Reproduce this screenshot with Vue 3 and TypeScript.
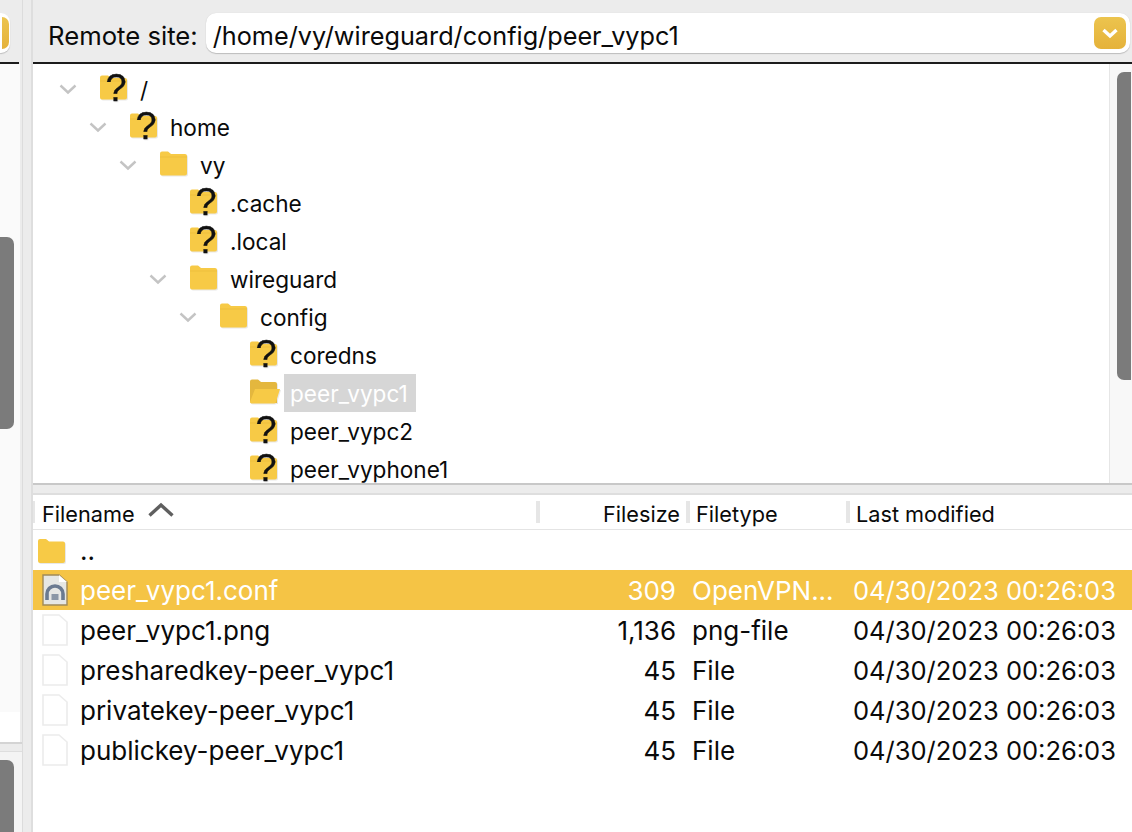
<template>
  <div class="window">
    <aside class="left">
      <div class="left-bar">
        <div class="left-input"><span class="left-drop" /></div>
      </div>
      <div class="left-list">
        <div class="thumb left-thumb-a" />
        <div class="left-list-fill" />
        <div class="left-list-white" />
      </div>
      <div class="left-sash" />
      <div class="left-status">
        <div class="thumb left-thumb-b" />
      </div>
    </aside>
    <div class="sash-v" />
    <main class="right">
      <div class="site-bar">
        <label class="site-label">Remote site:</label>
        <div class="site-input">
          <span class="site-path">/home/vy/wireguard/config/peer_vypc1</span>
          <span class="site-drop">
            <svg viewBox="0 0 32 32" width="32" height="32">
              <path d="M9.5 13 L16 19 L22.5 13" fill="none" stroke="#fff" stroke-width="3.4" />
            </svg>
          </span>
        </div>
      </div>
      <div class="tree-wrap">
        <div class="tree">
          <div
            v-for="node in treeNodes"
            :key="node.name + node.depth"
            class="tree-row"
            :style="{ paddingLeft: 25 + node.depth * 30 + 'px' }"
          >
            <svg v-if="node.open" class="chev" viewBox="0 0 20 12" width="20" height="12">
              <path d="M2.5 2.5 L10 9.5 L17.5 2.5" fill="none" stroke="#c4c4c4" stroke-width="2.4" />
            </svg>
            <span v-else class="chev-gap" />
            <svg class="folder" viewBox="0 0 30 32" width="30" height="32">
              <template v-if="node.kind === 'selected'">
                <path d="M1 5.5 Q1 3.5 3 3.5 H9 L12 6 H26 Q28 6 28 8 V27 H3 Q1 27 1 25 Z" fill="#e4b73e" />
                <path d="M6 13 H31 L27 26 Q26.6 27.5 25 27.5 H2.5 Q0.6 27.5 1.2 25.5 Z" fill="#f7ca46" />
              </template>
              <template v-else>
                <path d="M1 5.5 Q1 3.5 3 3.5 H9 L12 6 H26 Q28 6 28 8 V25.5 Q28 27.5 26 27.5 H3 Q1 27.5 1 25.5 Z" fill="#f7ca46" />
                <path d="M1 9 H28" stroke="#eebf3d" stroke-width="1" />
              </template>
              <text
                v-if="node.kind === 'unknown'"
                x="17"
                y="29"
                text-anchor="middle"
                class="question"
              >?</text>
            </svg>
            <span class="tree-name" :class="{ active: node.kind === 'selected' }">{{ node.name }}</span>
          </div>
        </div>
        <div class="tree-scroll">
          <div class="thumb tree-thumb" />
        </div>
      </div>
      <div class="sash-h" />
      <section class="table">
        <header class="thead">
          <div class="th col-name">
            <span>Filename</span>
            <svg viewBox="0 0 28 18" width="28" height="18">
              <path d="M2.5 14.5 L14 4 L25.5 14.5" fill="none" stroke="#5f5f5f" stroke-width="3.4" />
            </svg>
          </div>
          <div class="th col-size">Filesize</div>
          <div class="th col-type">Filetype</div>
          <div class="th col-date">Last modified</div>
        </header>
        <div
          v-for="file in files"
          :key="file.name"
          class="row"
          :class="{ selected: file.selected }"
        >
          <div class="cell col-name">
            <svg v-if="file.icon === 'folder'" class="file-icon is-folder" viewBox="0 0 30 32" width="30" height="32">
              <path d="M1 5 Q1 3 3 3 H9 L12 5.5 H26 Q28 5.5 28 7.5 V25 Q28 27 26 27 H3 Q1 27 1 25 Z" fill="#f7ca46" />
            </svg>
            <svg v-else-if="file.icon === 'conf'" class="file-icon" viewBox="0 0 30 32" width="30" height="32">
              <path d="M3 1 H19 L27 8 V31 H3 Z" fill="#e6e7e4" stroke="#a08a58" stroke-width="1.4" />
              <path d="M19 1 L27 8 H19 Z" fill="#fff" />
              <path d="M7 26 V20 A8 8 0 0 1 23 20 V26" fill="none" stroke="#6b7a90" stroke-width="3.6" />
              <rect x="11.5" y="20" width="7" height="6" fill="#8b97a6" />
            </svg>
            <svg v-else class="file-icon" viewBox="0 0 30 32" width="30" height="32">
              <path d="M3 1 H19 L27 8 V31 H3 Z" fill="#fff" stroke="#ececec" stroke-width="1.6" />
            </svg>
            <span class="file-name">{{ file.name }}</span>
          </div>
          <div class="cell col-size">{{ file.size }}</div>
          <div class="cell col-type">{{ file.type }}</div>
          <div class="cell col-date">{{ file.modified }}</div>
        </div>
      </section>
    </main>
  </div>
</template>

<script setup lang="ts">
interface TreeNode {
  name: string
  depth: number
  open: boolean
  kind: 'folder' | 'unknown' | 'selected'
}

interface FileRow {
  name: string
  size: string
  type: string
  modified: string
  icon: 'folder' | 'conf' | 'file'
  selected?: boolean
}

const STAMP = '04/30/2023 00:26:03'

const treeNodes: TreeNode[] = [
  { name: '/', depth: 0, open: true, kind: 'unknown' },
  { name: 'home', depth: 1, open: true, kind: 'unknown' },
  { name: 'vy', depth: 2, open: true, kind: 'folder' },
  { name: '.cache', depth: 3, open: false, kind: 'unknown' },
  { name: '.local', depth: 3, open: false, kind: 'unknown' },
  { name: 'wireguard', depth: 3, open: true, kind: 'folder' },
  { name: 'config', depth: 4, open: true, kind: 'folder' },
  { name: 'coredns', depth: 5, open: false, kind: 'unknown' },
  { name: 'peer_vypc1', depth: 5, open: false, kind: 'selected' },
  { name: 'peer_vypc2', depth: 5, open: false, kind: 'unknown' },
  { name: 'peer_vyphone1', depth: 5, open: false, kind: 'unknown' },
]

const files: FileRow[] = [
  { name: '..', size: '', type: '', modified: '', icon: 'folder' },
  { name: 'peer_vypc1.conf', size: '309', type: 'OpenVPN...', modified: STAMP, icon: 'conf', selected: true },
  { name: 'peer_vypc1.png', size: '1,136', type: 'png-file', modified: STAMP, icon: 'file' },
  { name: 'presharedkey-peer_vypc1', size: '45', type: 'File', modified: STAMP, icon: 'file' },
  { name: 'privatekey-peer_vypc1', size: '45', type: 'File', modified: STAMP, icon: 'file' },
  { name: 'publickey-peer_vypc1', size: '45', type: 'File', modified: STAMP, icon: 'file' },
]
</script>

<style>
html,
body {
  margin: 0;
  background: #ececec;
  overflow: hidden;
}
</style>

<style scoped>
.window {
  display: flex;
  width: 1132px;
  height: 832px;
  overflow: hidden;
  background: #ececec;
  color: #0a0a0a;
  font-family: Inter, "Liberation Sans", sans-serif;
  font-size: 26px;
}

.left {
  display: flex;
  flex-direction: column;
  width: 22px;
  flex-shrink: 0;
  border-right: 1px solid #dcdcdc;
}

.left-bar {
  width: 19px;
  height: 64px;
  box-sizing: border-box;
  padding-top: 13px;
  border-bottom: 2px solid #1c1c1c;
}

.left-input {
  display: flex;
  justify-content: flex-end;
  width: 10px;
  height: 40px;
  padding-top: 4px;
  box-sizing: border-box;
  background: #fff;
  border-radius: 0 9px 9px 0;
  box-shadow: 0 1px 1px #bdbdbd;
}

.left-drop {
  display: block;
  width: 7px;
  height: 32px;
  margin-right: 1px;
  border-radius: 0 7px 7px 0;
  background: linear-gradient(#ecc44e, #e5b23a);
}

.left-list {
  position: relative;
  display: flex;
  flex-direction: column;
  width: 20px;
  height: 678px;
}

.left-list-fill {
  height: 648px;
  background: #fafafa;
}

.left-list-white {
  height: 30px;
  background: #fff;
}

.left-sash {
  height: 10px;
  box-sizing: border-box;
  border-top: 2px solid #d4d4d4;
  border-bottom: 1px solid #dedede;
}

.left-status {
  position: relative;
  flex: 1;
  background: #f4f4f4;
}

.thumb {
  position: absolute;
  background: #7b7b7b;
  border-radius: 7px;
}

.left-thumb-a {
  left: 0;
  top: 173px;
  width: 14px;
  height: 192px;
  border-radius: 0 7px 7px 0;
}

.left-thumb-b {
  left: 0;
  top: 8px;
  width: 14px;
  bottom: 0;
  border-radius: 0 7px 0 0;
}

.sash-v {
  width: 10px;
  flex-shrink: 0;
  background: #ececec;
  box-sizing: border-box;
  border-right: 2px solid #dedede;
}

.right {
  flex: 1;
  min-width: 0;
  display: flex;
  flex-direction: column;
}

.site-bar {
  display: flex;
  align-items: flex-start;
  gap: 8px;
  height: 64px;
  box-sizing: border-box;
  padding: 13px 0 0 15px;
  border-bottom: 2px solid #1c1c1c;
}

.site-label {
  font-size: 25.7px;
  line-height: 45px;
  height: 40px;
  white-space: nowrap;
}

.site-input {
  display: flex;
  align-items: center;
  justify-content: space-between;
  flex: 1;
  height: 40px;
  margin-right: 2px;
  padding: 0 4px 0 7px;
  box-sizing: border-box;
  background: #fff;
  border-radius: 10px;
  box-shadow: 0 1px 1px #bdbdbd, 0 0 1px #d0d0d0;
}

.site-path {
  font-size: 25.25px;
  height: 40px;
  line-height: 47px;
  white-space: nowrap;
}

.site-drop {
  display: flex;
  width: 32px;
  height: 32px;
  border-radius: 7px;
  background: linear-gradient(#ecc44e, #e5b23a);
}

.tree-wrap {
  display: flex;
  height: 419px;
  background: #fff;
}

.tree {
  flex: 1;
  min-width: 0;
  padding-top: 6px;
}

.tree-row {
  display: flex;
  align-items: center;
  height: 38px;
}

.chev {
  margin-right: 21px;
  flex-shrink: 0;
}

.chev-gap {
  width: 41px;
  flex-shrink: 0;
}

.folder {
  flex-shrink: 0;
  margin-top: -2px;
  margin-right: 5px;
  overflow: visible;
  filter: drop-shadow(1px 1px 0 #e8e8e8);
}

.question {
  font-family: "Liberation Sans", sans-serif;
  font-size: 38px;
  fill: #111;
  stroke: #111;
  stroke-width: 0.3px;
}

.tree-name {
  padding: 0 6px;
  height: 38px;
  font-size: 22.6px;
  line-height: 39px;
  white-space: nowrap;
}

.tree-name.active {
  background: #d6d6d6;
  color: #fff;
  min-width: 120px;
}

.tree-scroll {
  position: relative;
  width: 22px;
  flex-shrink: 0;
  background: #f8f8f8;
  border-left: 1px solid #e6e6e6;
}

.tree-thumb {
  left: 7px;
  top: 8px;
  width: 14px;
  height: 308px;
  border-radius: 7px 0 0 7px;
}

.sash-h {
  position: relative;
  height: 12px;
  flex-shrink: 0;
  box-sizing: border-box;
  background: #ececec;
  border-top: 2px solid #c8c8c8;
  border-bottom: 2px solid #dedede;
}

.table {
  flex: 1;
  background: #fff;
}

.thead {
  display: flex;
  align-items: center;
  height: 35px;
  box-sizing: border-box;
  border-bottom: 1px solid #e4e4e4;
  font-size: 21.7px;
}

.th {
  display: flex;
  align-items: flex-start;
  gap: 12px;
  height: 22px;
  line-height: 26px;
  white-space: nowrap;
  border-left: 4px solid #e6e6e6;
}

.row {
  display: flex;
  align-items: center;
  height: 40px;
}

.row.selected {
  background: #f5c445;
  color: #fff;
}

.cell {
  display: flex;
  align-items: center;
  height: 40px;
  line-height: 43px;
  white-space: nowrap;
}

.col-name {
  width: 503px;
  box-sizing: border-box;
}

.th.col-name {
  padding-left: 7px;
  border-left-width: 2px;
}

.cell.col-name {
  padding-left: 7px;
}

.file-icon {
  flex-shrink: 0;
  margin-right: 10px;
}

.file-icon.is-folder {
  margin-left: -3px;
  margin-right: 13px;
  margin-top: 3px;
  filter: drop-shadow(1px 1px 0 #e8e8e8);
}

.col-size {
  width: 150px;
  box-sizing: border-box;
  justify-content: flex-end;
}

.th.col-size {
  padding-right: 6px;
}

.cell.col-size {
  padding-right: 10px;
}

.col-type {
  width: 160px;
  box-sizing: border-box;
}

.th.col-type {
  padding-left: 6px;
}

.cell.col-type {
  padding-left: 6px;
}

.col-date {
  flex: 1;
  box-sizing: border-box;
}

.th.col-date {
  padding-left: 6px;
}

.cell.col-date {
  padding-left: 7px;
  font-size: 25.5px;
}
</style>
